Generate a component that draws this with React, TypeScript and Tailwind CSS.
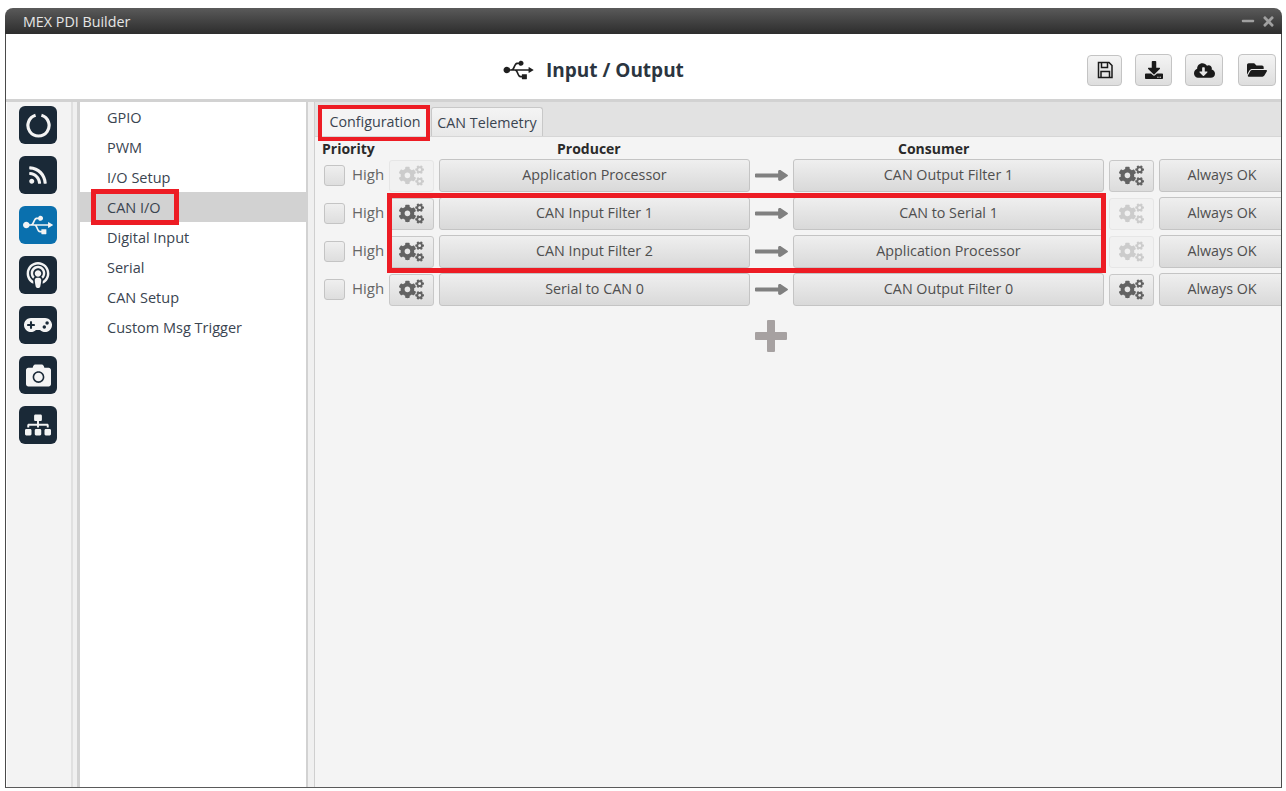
import { FaUsb, FaRss, FaGamepad, FaCamera, FaSitemap, FaDownload, FaCloudDownloadAlt, FaFolderOpen, FaCogs, FaLongArrowAltRight, FaPodcast, FaMinus, FaTimes } from "react-icons/fa"

const menuItems = ["GPIO", "PWM", "I/O Setup", "CAN I/O", "Digital Input", "Serial", "CAN Setup", "Custom Msg Trigger"]

const rows = [
    { producer: "Application Processor", consumer: "CAN Output Filter 1", producerGear: false, consumerGear: true },
    { producer: "CAN Input Filter 1", consumer: "CAN to Serial 1", producerGear: true, consumerGear: false },
    { producer: "CAN Input Filter 2", consumer: "Application Processor", producerGear: true, consumerGear: false },
    { producer: "Serial to CAN 0", consumer: "CAN Output Filter 0", producerGear: true, consumerGear: true },
]

function GearButton({ enabled }: { enabled: boolean }) {
    return enabled ? (
        <div className="w-[45px] h-[32px] shrink-0 flex items-center justify-center rounded-[3px] border border-[#c8c8c8] bg-gradient-to-b from-[#f0f0f0] to-[#dcdcdc] text-[#636363]">
            <FaCogs className="w-[25px] h-[25px]" />
        </div>
    ) : (
        <div className="w-[45px] h-[32px] shrink-0 flex items-center justify-center rounded-[3px] border border-[#e6e6e6] bg-[#f1f1f1] text-[#cccccc]">
            <FaCogs className="w-[25px] h-[25px]" />
        </div>
    )
}

function WideButton({ label }: { label: string }) {
    return (
        <div className="w-[311px] h-[33px] shrink-0 flex items-center justify-center pb-[2px] rounded-[3px] border border-[#c4c4c4] bg-gradient-to-b from-[#efefef] to-[#d9d9d9] text-[#4f4f4f]">
            {label}
        </div>
    )
}

function Row({ producer, consumer, producerGear, consumerGear }: (typeof rows)[number]) {
    return (
        <div className="flex items-center h-[33px]">
            <div className="w-[21px] h-[21px] ml-[9px] shrink-0 rounded-[3px] border border-[#c4c4c4] bg-gradient-to-b from-[#efefef] to-[#dedede]" />
            <span className="w-[37px] ml-[7px] pb-[2px] shrink-0 text-[15px] text-[#666]">High</span>
            <GearButton enabled={producerGear} />
            <div className="w-[5px] shrink-0" />
            <WideButton label={producer} />
            <div className="w-[43px] shrink-0 flex justify-center pr-[1px] text-[#808080]">
                <FaLongArrowAltRight className="w-[33px] h-[25px]" preserveAspectRatio="none" />
            </div>
            <WideButton label={consumer} />
            <div className="w-[5px] shrink-0" />
            <GearButton enabled={consumerGear} />
            <div className="w-[5px] shrink-0" />
            <div className="w-[130px] h-[33px] shrink-0 flex items-center justify-center pr-[4px] pb-[2px] rounded-[3px] border border-[#c4c4c4] bg-gradient-to-b from-[#efefef] to-[#d9d9d9] text-[#4f4f4f]">
                Always OK
            </div>
        </div>
    )
}

const iconTileClass = "w-[38px] h-[38px] rounded-[6px] flex items-center justify-center text-[#f4f4f4] bg-[#1a2937]"

export default function App() {
    return (
        <div className="w-[1286px] h-[791px] bg-white pt-[8px] pl-[5px] pr-[4px] pb-[3px] overflow-hidden font-['Open_Sans',sans-serif] text-[14.3px] text-[#3a4450]">
            <div className="h-full flex flex-col">
                <div className="h-[26px] shrink-0 flex items-center justify-between pl-[18px] pr-[6px] rounded-t-[8px] bg-gradient-to-b from-[#5a5a5a] to-[#2d2d2d] text-[#e6e6e6]">
                    <span className="pt-[1px]">MEX PDI Builder</span>
                    <div className="flex items-center gap-[6px] text-[#a0a0a0]">
                        <FaMinus className="w-[14px] h-[14px]" />
                        <FaTimes className="w-[15px] h-[15px]" />
                    </div>
                </div>

                <div className="flex-1 min-h-0 flex flex-col border-x border-b border-x-[#4a4a4a] border-b-[#5a5a5a] bg-white">
                    <div className="h-[65px] shrink-0 relative flex items-center justify-end pr-[5px] pt-[7px]">
                        <div className="absolute left-[496px] top-[24px] flex items-center gap-[11px] text-[#1f1f1f]">
                            <FaUsb className="w-[33px] h-[24px]" />
                            <span className="text-[19px] leading-[24px] font-bold text-[#2b3540]">Input / Output</span>
                        </div>
                        <div className="flex items-center text-[#1a1a1a]">
                            <div className="w-[35px] h-[31px] flex items-center justify-center rounded-[4px] border border-[#c4c4c4] bg-gradient-to-b from-[#f4f4f4] to-[#dedede]">
                                <svg viewBox="0 0 16 18" className="w-[16px] h-[18px]" fill="none" stroke="currentColor" strokeWidth="1.5">
                                    <path d="M1.5 1.5 H12 L15 4.5 V16.5 H1.5 Z" />
                                    <path d="M4.5 1.5 V6.5 H10.5 V1.5" />
                                    <path d="M4 16.5 V10.5 H12.5 V16.5" />
                                </svg>
                            </div>
                            <div className="w-[37px] h-[32px] ml-[13px] flex items-center justify-center rounded-[4px] border border-[#c4c4c4] bg-gradient-to-b from-[#f4f4f4] to-[#dedede]">
                                <FaDownload className="w-[18px] h-[18px]" />
                            </div>
                            <div className="w-[38px] h-[32px] ml-[13px] flex items-center justify-center rounded-[4px] border border-[#c4c4c4] bg-gradient-to-b from-[#f4f4f4] to-[#dedede]">
                                <FaCloudDownloadAlt className="w-[21px] h-[19px]" />
                            </div>
                            <div className="w-[38px] h-[32px] ml-[15px] flex items-center justify-center rounded-[4px] border border-[#c4c4c4] bg-gradient-to-b from-[#f4f4f4] to-[#dedede]">
                                <FaFolderOpen className="w-[20px] h-[18px]" />
                            </div>
                        </div>
                    </div>

                    <div className="flex-1 min-h-0 flex border-t-[3px] border-[#d2d2d2]">
                        <div className="w-[64px] shrink-0 ml-[1px] pt-[4px] pl-[12px] flex flex-col gap-[12px] bg-[#f3f3f3]">
                            <div className={iconTileClass}>
                                <svg viewBox="0 0 24 24" className="w-[27px] h-[27px]" fill="none" stroke="currentColor" strokeWidth="2.8">
                                    <path d="M9.4 2.9 A9.4 9.4 0 1 0 14.6 2.9" />
                                </svg>
                            </div>
                            <div className={iconTileClass}>
                                <FaRss className="w-[20px] h-[20px]" />
                            </div>
                            <div className="w-[38px] h-[38px] rounded-[6px] flex items-center justify-center text-[#f4f4f4] bg-[#0a70ae]">
                                <FaUsb className="w-[32px] h-[24px]" />
                            </div>
                            <div className={iconTileClass}>
                                <FaPodcast className="w-[24px] h-[26px]" />
                            </div>
                            <div className={iconTileClass}>
                                <FaGamepad className="w-[28px] h-[26px]" />
                            </div>
                            <div className={iconTileClass}>
                                <FaCamera className="w-[27px] h-[25px]" />
                            </div>
                            <div className={iconTileClass}>
                                <FaSitemap className="w-[26px] h-[26px]" />
                            </div>
                        </div>

                        <div className="w-[9px] shrink-0 flex bg-[#f0f0f0]">
                            <div className="w-[2px] bg-[#e0e0e0]" />
                            <div className="flex-1" />
                            <div className="w-[3px] bg-[#d2d2d2]" />
                        </div>

                        <div className="w-[226px] shrink-0 relative bg-white text-[14.5px]">
                            {menuItems.map((item) => (
                                <div key={item} className={item === "CAN I/O" ? "h-[30px] pl-[27px] pt-[1px] flex items-center bg-[#d2d2d2]" : "h-[30px] pl-[27px] pt-[1px] flex items-center"}>
                                    {item}
                                </div>
                            ))}
                            <div className="absolute left-[11px] top-[87px] w-[88px] h-[36px] border-[5px] border-[#ed1c24]" />
                        </div>

                        <div className="w-[9px] shrink-0 flex bg-[#f0f0f0]">
                            <div className="w-[2px] bg-[#d2d2d2]" />
                            <div className="flex-1" />
                            <div className="w-[1px] bg-[#cfcfcf]" />
                        </div>

                        <div className="flex-1 min-w-0 relative overflow-hidden bg-[#f4f4f4]">
                            <div className="h-[35px] flex items-end pl-[5px] bg-[#e2e2e2] border-b border-[#d6d6d6]">
                                <div className="h-[29px] w-[110px] pt-[1px] flex items-center justify-center bg-[#f4f4f4]">Configuration</div>
                                <div className="h-[29px] w-[112px] ml-[1px] pt-[1px] flex items-center justify-center rounded-t-[3px] border border-b-0 border-[#c8c8c8] bg-gradient-to-b from-[#f4f4f4] to-[#e8e8e8]">CAN Telemetry</div>
                            </div>
                            <div className="h-[22px] pt-[1px] flex items-center font-bold text-[14px] text-[#2a2a2a]">
                                <span className="w-[242px] pl-[7px]">Priority</span>
                                <span className="w-[341px]">Producer</span>
                                <span>Consumer</span>
                            </div>
                            <div className="flex flex-col gap-[5px]">
                                {rows.map((row) => (
                                    <Row key={row.producer} {...row} />
                                ))}
                            </div>
                            <div className="mt-[14px] ml-[440px] text-[#a6a1a1]">
                                <svg viewBox="0 0 32 32" className="w-[32px] h-[32px]" fill="currentColor">
                                    <path d="M12 1 Q12 0 13 0 H19 Q20 0 20 1 V12 H31 Q32 12 32 13 V19 Q32 20 31 20 H20 V31 Q20 32 19 32 H13 Q12 32 12 31 V20 H1 Q0 20 0 19 V13 Q0 12 1 12 H12 Z" />
                                </svg>
                            </div>
                            <div className="absolute left-[3px] top-[3px] w-[112px] h-[36px] border-[4px] border-[#ed1c24]" />
                            <div className="absolute left-[72px] top-[91px] w-[719px] h-[80px] border-[5px] border-[#ed1c24]" />
                        </div>
                    </div>
                </div>
            </div>
        </div>
    )
}
